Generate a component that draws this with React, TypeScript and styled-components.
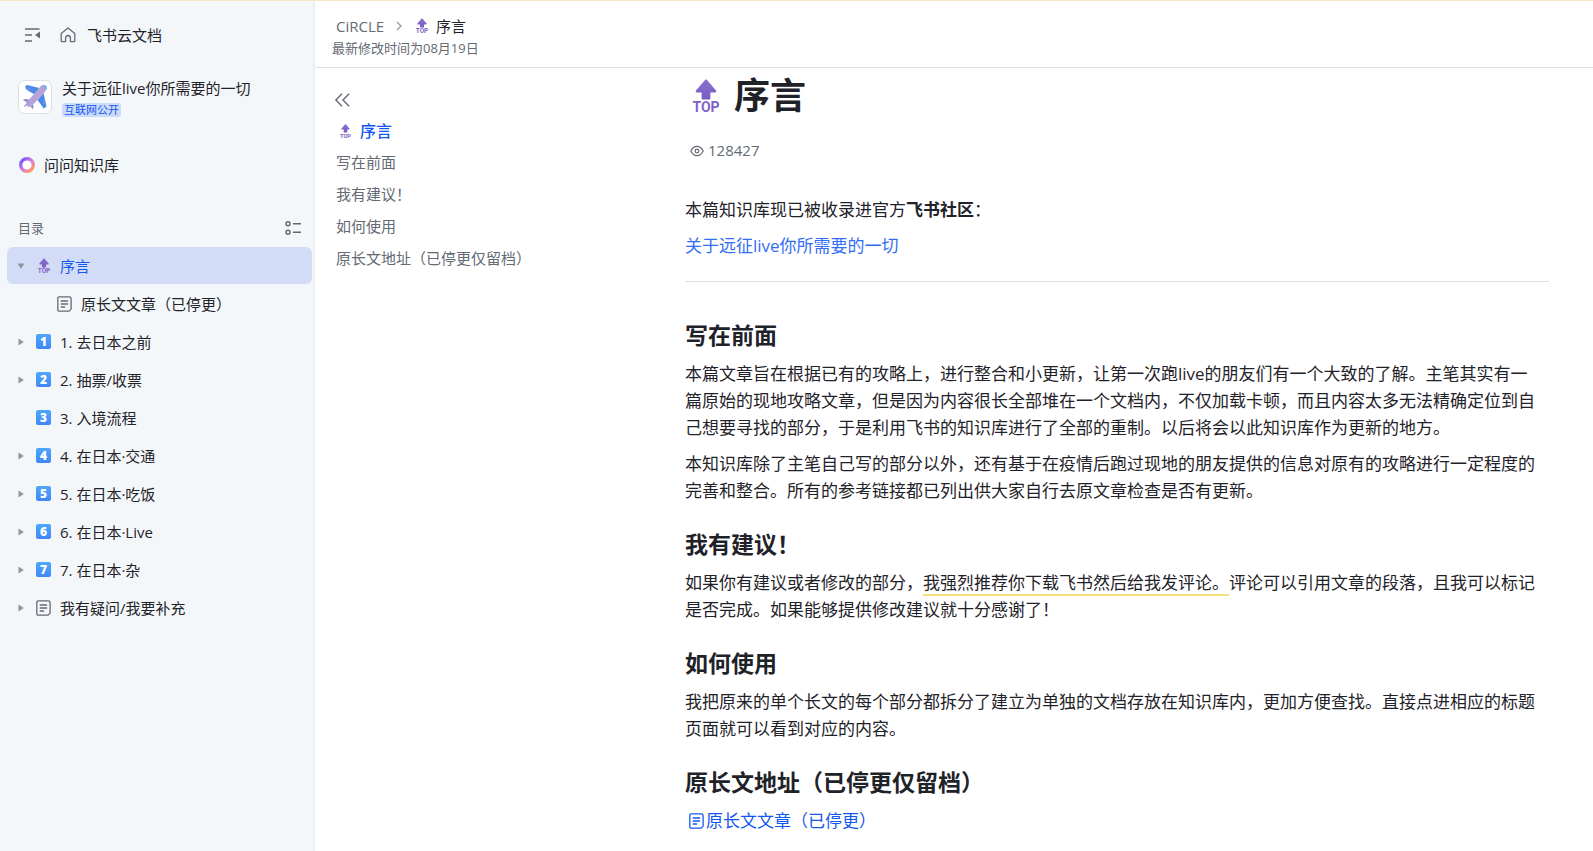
import React from "react";
import styled, { createGlobalStyle } from "styled-components";

const c = {
  text: "#1f2329",
  sub: "#646a73",
  line: "#dee0e3",
  blue: "#1456f0",
  link: "#336df4",
  side: "#f4f7fa",
};

const GlobalStyle = createGlobalStyle`
  * { box-sizing: border-box; }
  body {
    margin: 0;
    background: #fff;
    color: ${c.text};
    font-family: "Open Sans", "Noto Sans CJK SC", sans-serif;
    font-size: 15px;
    line-height: 22px;
    text-spacing-trim: space-all;
  }
  a { color: inherit; text-decoration: none; }
  button {
    display: inline-flex;
    align-items: center;
    justify-content: center;
    padding: 0;
    border: 0;
    background: none;
    color: ${c.sub};
    cursor: pointer;
  }
  svg { display: block; flex: none; overflow: visible; }
  h1, h2, p, ul { margin: 0; padding: 0; }
  ul { list-style: none; }
`;

const Page = styled.div`
  display: flex;
  min-height: 100vh;
  border-top: 1px solid #fbe6c2;
`;

const Sidebar = styled.aside`
  flex: none;
  width: 315px;
  background: ${c.side};
  border-right: 2px solid #eceef1;
`;

const SideTop = styled.div`
  display: flex;
  align-items: center;
  gap: 19px;
  padding: 23px 24px 0;
`;

const HomeLink = styled.a`
  display: flex;
  align-items: center;
  gap: 11px;
`;

const Space = styled.div`
  display: flex;
  align-items: center;
  gap: 10px;
  padding: 31px 18px 0;
`;

const SpaceIcon = styled.span`
  display: flex;
  align-items: center;
  justify-content: center;
  width: 34px;
  height: 34px;
  border: 1px solid #dcdfe4;
  border-radius: 7px;
  background: #fff;
`;

const SpaceInfo = styled.div`
  display: flex;
  flex-direction: column;
  align-items: flex-start;
  gap: 4px;
`;

const Badge = styled.span`
  padding: 0 2px;
  border-radius: 3px;
  background: #cddbfb;
  color: ${c.blue};
  font-size: 11px;
  line-height: 14px;
`;

const AskLink = styled.a`
  display: flex;
  align-items: center;
  gap: 8px;
  padding: 37px 18px 0;
`;

const CatalogHead = styled.div`
  display: flex;
  align-items: center;
  justify-content: space-between;
  padding: 41px 12px 8px 18px;
  color: ${c.sub};
  font-size: 13px;
`;

const Tree = styled.ul`
  display: flex;
  flex-direction: column;
  gap: 1px;
  padding: 0 1px 0 7px;
`;

const TreeRow = styled.li<{ $active?: boolean; $nested?: boolean }>`
  display: flex;
  align-items: center;
  gap: 7px;
  height: 37px;
  padding-left: ${(p) => (p.$nested ? 27 : 6)}px;
  border-radius: 6px;
  background: ${(p) => (p.$active ? "#d3dcf6" : "transparent")};
  color: ${(p) => (p.$active ? c.blue : c.text)};
`;

const ToggleSlot = styled.span`
  display: flex;
  justify-content: center;
  width: 16px;
`;

const TreeLink = styled.a`
  display: flex;
  flex: 1;
  align-items: center;
  gap: 9px;
`;

const IconSlot = styled.span`
  display: flex;
  justify-content: center;
  width: 15px;
  color: ${c.sub};
`;

const Keycap = styled.span`
  width: 15px;
  height: 15px;
  border-radius: 2px;
  background: linear-gradient(#4fa8fb, #3f86f7);
  color: #fff;
  font-size: 12px;
  font-weight: 800;
  line-height: 15px;
  text-align: center;
`;

const Main = styled.div`
  flex: 1;
  min-width: 0;
`;

const Header = styled.header`
  padding: 14px 17px 8px;
  border-bottom: 1px solid ${c.line};
`;

const Crumbs = styled.nav`
  display: flex;
  align-items: center;
  gap: 12px;
  padding-left: 4px;
  color: ${c.sub};
`;

const Current = styled.span`
  display: flex;
  align-items: center;
  gap: 8px;
  color: ${c.text};
`;

const Modified = styled.div`
  color: ${c.sub};
  font-size: 13px;
`;

const Body = styled.div`
  display: flex;
`;

const Outline = styled.nav`
  flex: none;
  width: 370px;
  padding: 22px 20px 0;
  color: ${c.sub};
`;

const OutlineTitle = styled.a`
  display: flex;
  align-items: center;
  gap: 9px;
  padding: 8px 0 0 5px;
  color: ${c.blue};
  font-size: 16px;
  font-weight: 500;
`;

const OutlineList = styled.ul`
  padding: 4px 0 0 1px;
  line-height: 32px;
`;

const Article = styled.article`
  flex: 1;
  min-width: 0;
  padding: 3px 44px 16px 0;
  font-size: 17px;
  line-height: 27px;
`;

const Title = styled.h1`
  display: flex;
  align-items: center;
  gap: 15px;
  padding-left: 8px;
  font-size: 36px;
  line-height: 50px;
`;

const Views = styled.div`
  display: flex;
  align-items: center;
  gap: 4px;
  padding: 16px 0 32px 5px;
  color: ${c.sub};
  font-size: 15px;
`;

const Paragraph = styled.p`
  padding-right: 8px;
  & + & { margin-top: 9px; }
`;

const Heading = styled.h2`
  margin: 24px 0 8px;
  font-size: 23px;
  line-height: 33px;
`;

const Divider = styled.hr`
  height: 1px;
  margin: 22px 0 37px;
  border: 0;
  background: ${c.line};
`;

const TextLink = styled.a`
  && { color: ${c.link}; }
`;

const DocLink = styled.a`
  && { color: ${c.blue}; }
  display: flex;
  align-items: center;
  gap: 2px;
  padding-left: 4px;
`;

const Commented = styled.span`
  text-decoration: underline 2px #f8df7c;
  text-underline-offset: 5px;
  text-decoration-skip-ink: none;
`;

const TopIcon = ({ size }: { size: number }) => (
  <svg width={size} height={Math.round(size * 1.3)} viewBox="1 0 26 34" aria-hidden="true">
    <defs>
      <linearGradient id="topArrow" x1="0" y1="0" x2="0" y2="1">
        <stop offset="0" stopColor="#8a6fd0" />
        <stop offset="1" stopColor="#7a5cc0" />
      </linearGradient>
    </defs>
    <path
      d="M13.2.8 4 11.600c-.7.8-.2 1.900.9 1.900h4.700v5.700c0 .8.5 1.300 1.300 1.300h6.200c.8 0 1.300-.5 1.300-1.300v-5.700h4.700c1.100 0 1.600-1.100.9-1.900L14.800.8c-.5-.5-1.100-.5-1.600 0Z"
      fill="url(#topArrow)"
    />
    <text x="14" y="33" textAnchor="middle" fontFamily="Roboto, sans-serif" fontSize="14" fontWeight="700" fill="#7f62c6">
      TOP
    </text>
  </svg>
);

const DocIcon = () => (
  <svg width="15" height="16" viewBox="0 0 15 16" fill="none" stroke="currentColor" strokeWidth="1.300" strokeLinecap="round" aria-hidden="true">
    <path d="M2.200.9h10.100c1 0 1.800.8 1.800 1.800v10.400l-2 2H2.200c-.8 0-1.400-.6-1.400-1.400V2.300C.8 1.500 1.400.9 2.200.9Z" strokeLinejoin="round" />
    <path d="M4.200 5h6.400M4.200 8h6.400M4.200 11h3.400" />
  </svg>
);

const Triangle = ({ open }: { open?: boolean }) => (
  <svg width="8" height="8" viewBox="0 0 8 8" fill="#8f959e" aria-hidden="true">
    <path d={open ? "M.6 1.500h6.800L4 6.800Z" : "M1.500.4v7.200L6.800 4Z"} />
  </svg>
);

const Plane = () => (
  <svg width="26" height="26" viewBox="0 0 26 26" aria-hidden="true">
    <path d="M3 2.500 5.200 1 17 4 13.500 11 4.500 5.800Z" fill="#4a8ae6" />
    <path d="m24.500 22.500-2.800 2L15.500 16 21.500 9Z" fill="#4a8ae6" />
    <path d="M3.500 17.500.8 15.500l2.300-.6 4.300.6 3.500 3.200.6 4.200-.8 2.300-2.200-3Z" fill="#9a86cf" />
    <path d="M18.500 2.200c2-1.500 4.800-1.600 5.700.1.900 1.600.2 3.700-1.200 5.400L10 21.800c-1.200 1.200-4 1.600-5 .1-.9-1.100-.5-3.400.7-4.600Z" fill="#b6a4d6" />
    <path d="M20.300 1.500c1.500-.6 3.500-.3 4.100.8.600 1.200.4 2.600-.3 3.800Z" fill="#6fb1f2" />
    <path d="M2.500 22.500 6.500 18.800" stroke="#8b9be0" strokeWidth="1.200" />
    <circle cx="6.800" cy="4.900" r="1.300" fill="#7e93df" />
    <circle cx="22.200" cy="18.800" r="1.300" fill="#7e93df" />
  </svg>
);

const Ring = () => (
  <svg width="18" height="18" viewBox="0 0 18 18" aria-hidden="true">
    <defs>
      <linearGradient id="ring" x1="0" y1="0" x2="1" y2="1">
        <stop offset="0.100" stopColor="#7a5cff" />
        <stop offset="0.500" stopColor="#d57be6" />
        <stop offset="0.900" stopColor="#ff9a5c" />
      </linearGradient>
    </defs>
    <circle cx="9" cy="9" r="6.300" fill="#fff" stroke="url(#ring)" strokeWidth="3.400" />
  </svg>
);

type Item = { label: string; icon: "top" | "doc" | number; state?: "open" | "closed"; nested?: boolean; active?: boolean };

const items: Item[] = [
  { label: "序言", icon: "top", state: "open", active: true },
  { label: "原长文文章（已停更）", icon: "doc", nested: true },
  { label: "1. 去日本之前", icon: 1, state: "closed" },
  { label: "2. 抽票/收票", icon: 2, state: "closed" },
  { label: "3. 入境流程", icon: 3 },
  { label: "4. 在日本·交通", icon: 4, state: "closed" },
  { label: "5. 在日本·吃饭", icon: 5, state: "closed" },
  { label: "6. 在日本·Live", icon: 6, state: "closed" },
  { label: "7. 在日本·杂", icon: 7, state: "closed" },
  { label: "我有疑问/我要补充", icon: "doc", state: "closed" },
];

const outline = ["写在前面", "我有建议！", "如何使用", "原长文地址（已停更仅留档）"];

const ItemIcon = ({ icon }: { icon: Item["icon"] }) => {
  if (icon === "top") return <TopIcon size={12} />;
  if (icon === "doc") return <DocIcon />;
  return <Keycap aria-hidden="true">{icon}</Keycap>;
};

export default function App() {
  return (
    <>
      <GlobalStyle />
      <Page lang="zh-CN">
        <Sidebar>
          <SideTop>
            <button type="button" aria-label="收起侧边栏">
              <svg width="17" height="16" viewBox="0 0 17 16" fill="none" stroke="currentColor" strokeWidth="1.400" aria-hidden="true">
                <path d="M1 2h14.500M1 8h7M1 14h7" />
                <path d="M16 4.500v7L11 8Z" fill="currentColor" stroke="none" />
              </svg>
            </button>
            <HomeLink href="#home">
              <svg width="16" height="16" viewBox="0 0 16 16" fill="none" stroke={c.sub} strokeWidth="1.300" strokeLinejoin="round" aria-hidden="true">
                <path d="M5.600 14.700H2.200c-.6 0-1-.4-1-1V6.600L8 1l6.800 5.600v7.100c0 .6-.4 1-1 1h-3.400v-4c0-1.200-.9-2.200-2.400-2.200s-2.400 1-2.400 2.200Z" />
              </svg>
              飞书云文档
            </HomeLink>
          </SideTop>
          <Space>
            <SpaceIcon>
              <Plane />
            </SpaceIcon>
            <SpaceInfo>
              <span>关于远征live你所需要的一切</span>
              <Badge>互联网公开</Badge>
            </SpaceInfo>
          </Space>
          <AskLink href="#ask">
            <Ring />
            问问知识库
          </AskLink>
          <CatalogHead>
            目录
            <button type="button" aria-label="目录视图">
              <svg width="16" height="16" viewBox="0 0 16 16" fill="none" stroke="currentColor" strokeWidth="1.500" aria-hidden="true">
                <circle cx="3" cy="3.700" r="2" />
                <circle cx="3" cy="12.300" r="2" />
                <path d="M8 3.700h8M8 12.300h8" />
              </svg>
            </button>
          </CatalogHead>
          <Tree>
            {items.map((it) => (
              <TreeRow key={it.label} $active={it.active} $nested={it.nested}>
                <ToggleSlot>
                  {it.state && (
                    <button type="button" aria-label={`展开 ${it.label}`} aria-expanded={it.state === "open"}>
                      <Triangle open={it.state === "open"} />
                    </button>
                  )}
                </ToggleSlot>
                <TreeLink href="#doc">
                  <IconSlot>
                    <ItemIcon icon={it.icon} />
                  </IconSlot>
                  {it.label}
                </TreeLink>
              </TreeRow>
            ))}
          </Tree>
        </Sidebar>
        <Main>
          <Header>
            <Crumbs>
              <a href="#circle">CiRCLE</a>
              <svg width="8" height="10" viewBox="0 0 8 10" fill="none" stroke="#8f959e" strokeWidth="1.200" aria-hidden="true">
                <path d="m1 1 4 4-4 4" />
              </svg>
              <Current>
                <TopIcon size={12} />
                序言
              </Current>
            </Crumbs>
            <Modified>最新修改时间为08月19日</Modified>
          </Header>
          <Body>
            <Outline>
              <button type="button" aria-label="收起大纲">
                <svg width="15" height="14" viewBox="0 0 15 14" fill="none" stroke="currentColor" strokeWidth="1.400" aria-hidden="true">
                  <path d="M7 .8.900 7 7 13.200M14.100.8 8 7l6.100 6.200" />
                </svg>
              </button>
              <OutlineTitle href="#top">
                <TopIcon size={11} />
                序言
              </OutlineTitle>
              <OutlineList>
                {outline.map((t) => (
                  <li key={t}>
                    <a href={`#${t}`}>{t}</a>
                  </li>
                ))}
              </OutlineList>
            </Outline>
            <Article>
              <Title>
                <TopIcon size={26} />
                序言
              </Title>
              <Views>
                <svg width="14" height="12" viewBox="0 0 14 12" fill="none" stroke="currentColor" strokeWidth="1.200" aria-hidden="true">
                  <path d="M.8 6C2.300 3 4.400 1.300 7 1.300S11.700 3 13.200 6C11.700 9 9.600 10.700 7 10.700S2.300 9 .8 6Z" />
                  <circle cx="7" cy="6" r="1.800" />
                </svg>
                128427
              </Views>
              <Paragraph>
                本篇知识库现已被收录进官方<strong>飞书社区</strong>：
              </Paragraph>
              <Paragraph>
                <TextLink href="#community">关于远征live你所需要的一切</TextLink>
              </Paragraph>
              <Divider />
              <Heading>写在前面</Heading>
              <Paragraph>
                本篇文章旨在根据已有的攻略上，进行整合和小更新，让第一次跑live的朋友们有一个大致的了解。主笔其实有一篇原始的现地攻略文章，但是因为内容很长全部堆在一个文档内，不仅加载卡顿，而且内容太多无法精确定位到自己想要寻找的部分，于是利用飞书的知识库进行了全部的重制。以后将会以此知识库作为更新的地方。
              </Paragraph>
              <Paragraph>
                本知识库除了主笔自己写的部分以外，还有基于在疫情后跑过现地的朋友提供的信息对原有的攻略进行一定程度的完善和整合。所有的参考链接都已列出供大家自行去原文章检查是否有更新。
              </Paragraph>
              <Heading>我有建议！</Heading>
              <Paragraph>
                如果你有建议或者修改的部分，<Commented>我强烈推荐你下载飞书然后给我发评论。</Commented>评论可以引用文章的段落，且我可以标记是否完成。如果能够提供修改建议就十分感谢了！
              </Paragraph>
              <Heading>如何使用</Heading>
              <Paragraph>
                我把原来的单个长文的每个部分都拆分了建立为单独的文档存放在知识库内，更加方便查找。直接点进相应的标题页面就可以看到对应的内容。
              </Paragraph>
              <Heading>原长文地址（已停更仅留档）</Heading>
              <Paragraph>
                <DocLink href="#archive">
                  <DocIcon />
                  原长文文章（已停更）
                </DocLink>
              </Paragraph>
            </Article>
          </Body>
        </Main>
      </Page>
    </>
  );
}
